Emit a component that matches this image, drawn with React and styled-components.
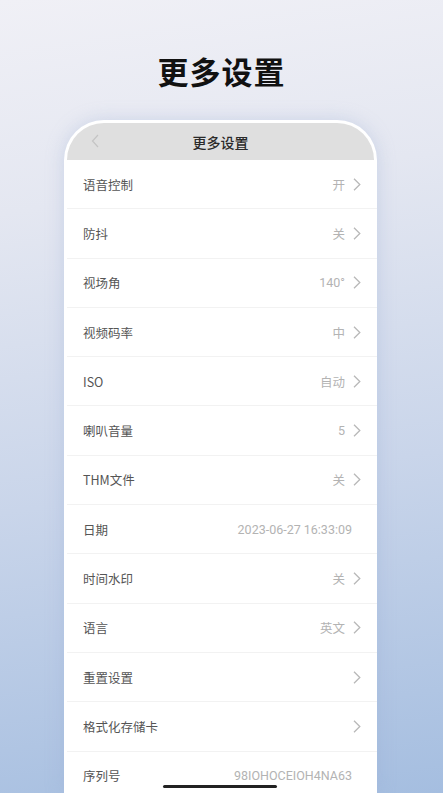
import React from "react";
import styled, { createGlobalStyle } from "styled-components";

const Global = createGlobalStyle`
  html, body { margin: 0; padding: 0; }
  body {
    width: 443px; height: 793px; overflow: hidden;
    font-family: "Noto Sans CJK SC", "Noto Sans", sans-serif;
  }
`;

const Page = styled.div`
  width: 443px;
  height: 793px;
  overflow: hidden;
  position: relative;
  background: linear-gradient(172deg, #f0f0f6 0%, #e4e7f1 25%, #c9d5ea 60%, #a5bee0 100%);
  display: flex;
  flex-direction: column;
  align-items: flex-start;
`;

const Heading = styled.h1`
  align-self: center;
  margin: 50px 0 0 0;
  font-size: 31px;
  line-height: 42px;
  font-weight: 700;
  color: #111;
  letter-spacing: 1px;
`;

const Phone = styled.div`
  margin: 28px 0 0 64px;
  width: 313px;
  background: #ffffff;
  border-radius: 40px 40px 0 0;
  padding: 3px 0 0 0;
  box-shadow: 0 0 18px rgba(150, 170, 210, 0.35);
  flex: 1;
  overflow: hidden;
`;

const NavBar = styled.div`
  margin: 0 3px;
  height: 37px;
  background: #dfdfdf;
  border-radius: 37px 37px 0 0;
  display: flex;
  align-items: center;
  justify-content: center;
  position: relative;
`;

const NavTitle = styled.div`
  font-size: 14px;
  color: #2a2a2a;
  font-weight: 500;
`;

const Back = styled.svg`
  position: absolute;
  left: 24px;
  top: 11px;
`;

const List = styled.div`
  display: flex;
  flex-direction: column;
`;

const Row = styled.div`
  height: 49.3px;
  box-sizing: border-box;
  display: flex;
  align-items: center;
  justify-content: space-between;
  padding: 0 16px 0 16px;
  border-bottom: 1px solid #f2f2f2;
  margin-left: 3px;
`;

const Label = styled.div`
  font-size: 12.5px;
  color: #555;
`;

const Right = styled.div`
  display: flex;
  align-items: center;
  gap: 8px;
`;

const Value = styled.div`
  font-size: 12.5px;
  color: #b3b3b3;
  font-family: ${(p) => (p.$latin ? '"Roboto", "Noto Sans CJK SC", sans-serif' : '"Noto Sans CJK SC", sans-serif')};
  margin-right: ${(p) => (p.$noArrow ? "9px" : "0")};
`;

const Home = styled.div`
  position: absolute;
  bottom: 5px;
  left: 163px;
  width: 114px;
  height: 3px;
  border-radius: 2px;
  background: #222;
`;

const Chevron = () => (
  <svg width="8" height="13" viewBox="0 0 8 13">
    <path d="M1 0.8 L6.8 6.5 L1 12.2" fill="none" stroke="#b8b8b8" strokeWidth="1.3" />
  </svg>
);

const rows = [
  { label: "语音控制", value: "开" },
  { label: "防抖", value: "关" },
  { label: "视场角", value: "140°", latin: true },
  { label: "视频码率", value: "中" },
  { label: "ISO", value: "自动" },
  { label: "喇叭音量", value: "5", latin: true },
  { label: "THM文件", value: "关" },
  { label: "日期", value: "2023-06-27 16:33:09", latin: true, noArrow: true },
  { label: "时间水印", value: "关" },
  { label: "语言", value: "英文" },
  { label: "重置设置", value: "" },
  { label: "格式化存储卡", value: "" },
  { label: "序列号", value: "98IOHOCEIOH4NA63", latin: true, noArrow: true },
];

export default function App() {
  return (
    <>
      <Global />
      <Page>
        <Heading>更多设置</Heading>
        <Phone>
          <NavBar>
            <Back width="8" height="14" viewBox="0 0 8 14">
              <path d="M7 1 L1.5 7 L7 13" fill="none" stroke="#c4c4c4" strokeWidth="1.2" />
            </Back>
            <NavTitle>更多设置</NavTitle>
          </NavBar>
          <List>
            {rows.map((r) => (
              <Row key={r.label}>
                <Label>{r.label}</Label>
                <Right>
                  {r.value && (
                    <Value $latin={r.latin} $noArrow={r.noArrow}>
                      {r.value}
                    </Value>
                  )}
                  {!r.noArrow && <Chevron />}
                </Right>
              </Row>
            ))}
          </List>
        </Phone>
        <Home />
      </Page>
    </>
  );
}
